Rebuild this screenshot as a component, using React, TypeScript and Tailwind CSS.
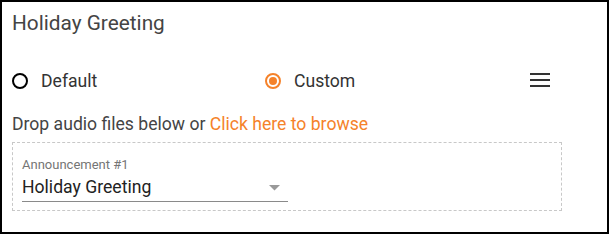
import React from "react";

export default function App() {
  return (
    <div className="w-[609px] h-[234px] border-2 border-black bg-white font-['Roboto',sans-serif] box-border">
      <div className="pl-[10px] pt-[9px]">
        <div className="text-[20.8px] leading-[24px] text-[#444]">Holiday Greeting</div>
        <div className="mt-[34px] flex items-center h-[24px]">
          <div className="w-[253px] flex items-center">
            <span className="w-[16px] h-[16px] rounded-full border-2 border-black box-border mr-[13px]" />
            <span className="text-[17.6px] leading-[24px] text-[#333]">Default</span>
          </div>
          <div className="w-[265px] flex items-center">
            <span className="w-[16px] h-[16px] rounded-full border-2 border-[#f5822a] box-border flex items-center justify-center mr-[13px]">
              <span className="w-[8px] h-[8px] rounded-full bg-[#f5822a]" />
            </span>
            <span className="text-[17.6px] leading-[24px] text-[#333]">Custom</span>
          </div>
          <svg width="20" height="14" viewBox="0 0 20 14" className="mt-[-2px]">
            <rect x="0" y="0" width="20" height="2" fill="#333" />
            <rect x="0" y="6" width="20" height="2" fill="#333" />
            <rect x="0" y="12" width="20" height="2" fill="#333" />
          </svg>
        </div>
        <div className="mt-[19px] text-[17.6px] leading-[24px] text-[#444]">
          Drop audio files below or <span className="text-[#f5822a]">Click here to browse</span>
        </div>
        <div className="mt-[6px] w-[550px] h-[69px] border border-dashed border-[#c8c8c8] box-border pl-[9px] pt-[14px]">
          <div className="text-[13px] leading-[16px] text-[#757575]">Announcement #1</div>
          <div className="mt-[2px] w-[266px] h-[27px] border-b border-[#8a8a8a] flex items-start justify-between pr-[8px]">
            <span className="text-[17.6px] leading-[24px] text-[#222]">Holiday Greeting</span>
            <svg width="11" height="6" viewBox="0 0 11 6" className="mt-[10px]">
              <path d="M0 0 L11 0 L5.5 5.5 Z" fill="#999" />
            </svg>
          </div>
        </div>
      </div>
    </div>
  );
}
